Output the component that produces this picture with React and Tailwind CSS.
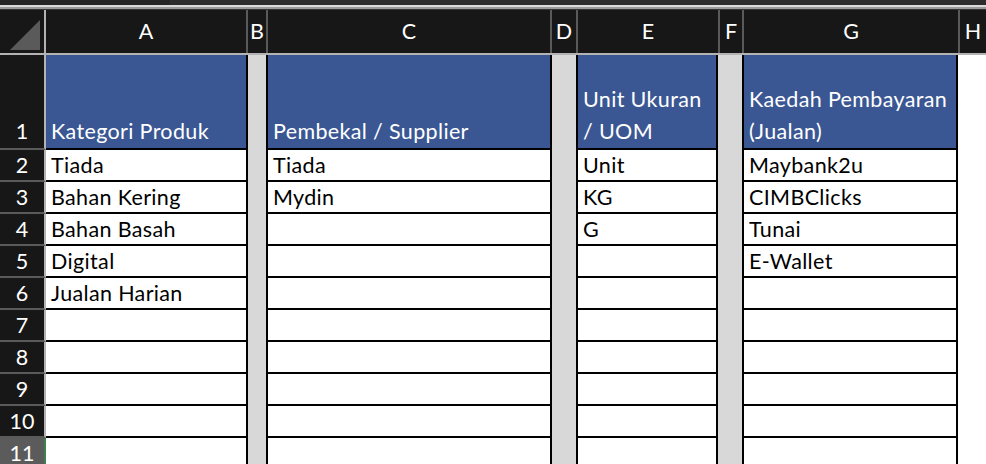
import React from "react";

const FONT = { fontFamily: "Lato, 'Open Sans', sans-serif" };

const rows = [2, 3, 4, 5, 6, 7, 8, 9, 10, 11];

const RowHeaders = () => (
  <div className="flex flex-col w-[46px] flex-none">
    <div className="h-[95px] flex items-end justify-center border-b-2 border-b-[#5a5a5a] border-r-2 border-r-[#b3b3b3] bg-[#171717] text-white leading-[32px] pb-px">
      1
    </div>
    {rows.map((n) =>
      n === 11 ? (
        <div
          key={n}
          className="h-[32px] flex-none flex items-center justify-center border-b-2 border-b-[#5a5a5a] border-r-2 border-r-[#3f7f4f] bg-[#5b5b5b] text-white leading-[30px]"
        >
          {n}
        </div>
      ) : (
        <div
          key={n}
          className="h-[32px] flex-none flex items-center justify-center border-b-2 border-b-[#5a5a5a] border-r-2 border-r-[#b3b3b3] bg-[#171717] text-white leading-[30px]"
        >
          {n}
        </div>
      )
    )}
  </div>
);

const DataColumn = ({ width, sides, title, values }) => (
  <div className={`flex flex-col flex-none ${width}`}>
    <div className={`h-[95px] flex flex-col justify-end bg-[#3a5793] text-white border-b-2 border-black pl-[5px] leading-[32px] pb-px tracking-[0.35px] ${sides}`}>
      {title}
    </div>
    {rows.map((n, i) => (
      <div
        key={n}
        className={`h-[32px] flex-none flex items-center bg-white text-black border-b-2 border-black pl-[5px] leading-[30px] whitespace-nowrap tracking-[0.35px] ${sides}`}
      >
        {values[i] || ""}
      </div>
    ))}
  </div>
);

const Spacer = ({ width }) => <div className={`flex-none self-stretch bg-[#d8d8d8] ${width}`} />;

export default function App() {
  return (
    <div className="w-[986px] h-[464px] overflow-hidden bg-white text-[21.5px]" style={FONT}>
      {/* window strip */}
      <div className="flex h-[5px]">
        <div className="w-[170px] bg-[#252525]" />
        <div className="flex-1 bg-[#2d2d2d]" />
      </div>
      <div className="h-[2px] bg-[#dadada]" />
      <div className="h-[2px] bg-[#9a9a9a]" />
      <div className="h-px bg-[#333]" />

      {/* column letters */}
      <div className="flex h-[45px] bg-[#171717] text-white border-b-2 border-[#b3b3b3]">
        <div className="w-[46px] flex-none border-r-2 border-[#b3b3b3] relative">
          <svg width="46" height="43" className="absolute left-0 top-0">
            <polygon points="10,40 40,10 40,40" fill="#5a5a5a" />
          </svg>
        </div>
        <div className="w-[202px] flex-none flex items-center justify-center border-r-2 border-[#5a5a5a]">A</div>
        <div className="w-[20px] flex-none flex items-center justify-center border-r-2 border-[#5a5a5a]">B</div>
        <div className="w-[284px] flex-none flex items-center justify-center border-r-2 border-[#5a5a5a]">C</div>
        <div className="w-[26px] flex-none flex items-center justify-center border-r-2 border-[#5a5a5a]">D</div>
        <div className="w-[142px] flex-none flex items-center justify-center border-r-2 border-[#5a5a5a]">E</div>
        <div className="w-[24px] flex-none flex items-center justify-center border-r-2 border-[#5a5a5a]">F</div>
        <div className="w-[216px] flex-none flex items-center justify-center border-r-2 border-[#5a5a5a]">G</div>
        <div className="flex-1 flex items-center justify-center">H</div>
      </div>

      {/* sheet body */}
      <div className="flex">
        <RowHeaders />
        <DataColumn
          width="w-[202px]"
          sides="border-r-2"
          title="Kategori Produk"
          values={["Tiada", "Bahan Kering", "Bahan Basah", "Digital", "Jualan Harian"]}
        />
        <Spacer width="w-[18px]" />
        <DataColumn
          width="w-[286px]"
          sides="border-x-2"
          title="Pembekal / Supplier"
          values={["Tiada", "Mydin"]}
        />
        <Spacer width="w-[24px]" />
        <DataColumn
          width="w-[142px]"
          sides="border-x-2"
          title={<>Unit Ukuran<br />/ UOM</>}
          values={["Unit", "KG", "G"]}
        />
        <Spacer width="w-[24px]" />
        <DataColumn
          width="w-[216px]"
          sides="border-x-2"
          title={<>Kaedah Pembayaran<br />(Jualan)</>}
          values={["Maybank2u", "CIMBClicks", "Tunai", "E-Wallet"]}
        />
        <Spacer width="flex-1" />
      </div>
    </div>
  );
}
